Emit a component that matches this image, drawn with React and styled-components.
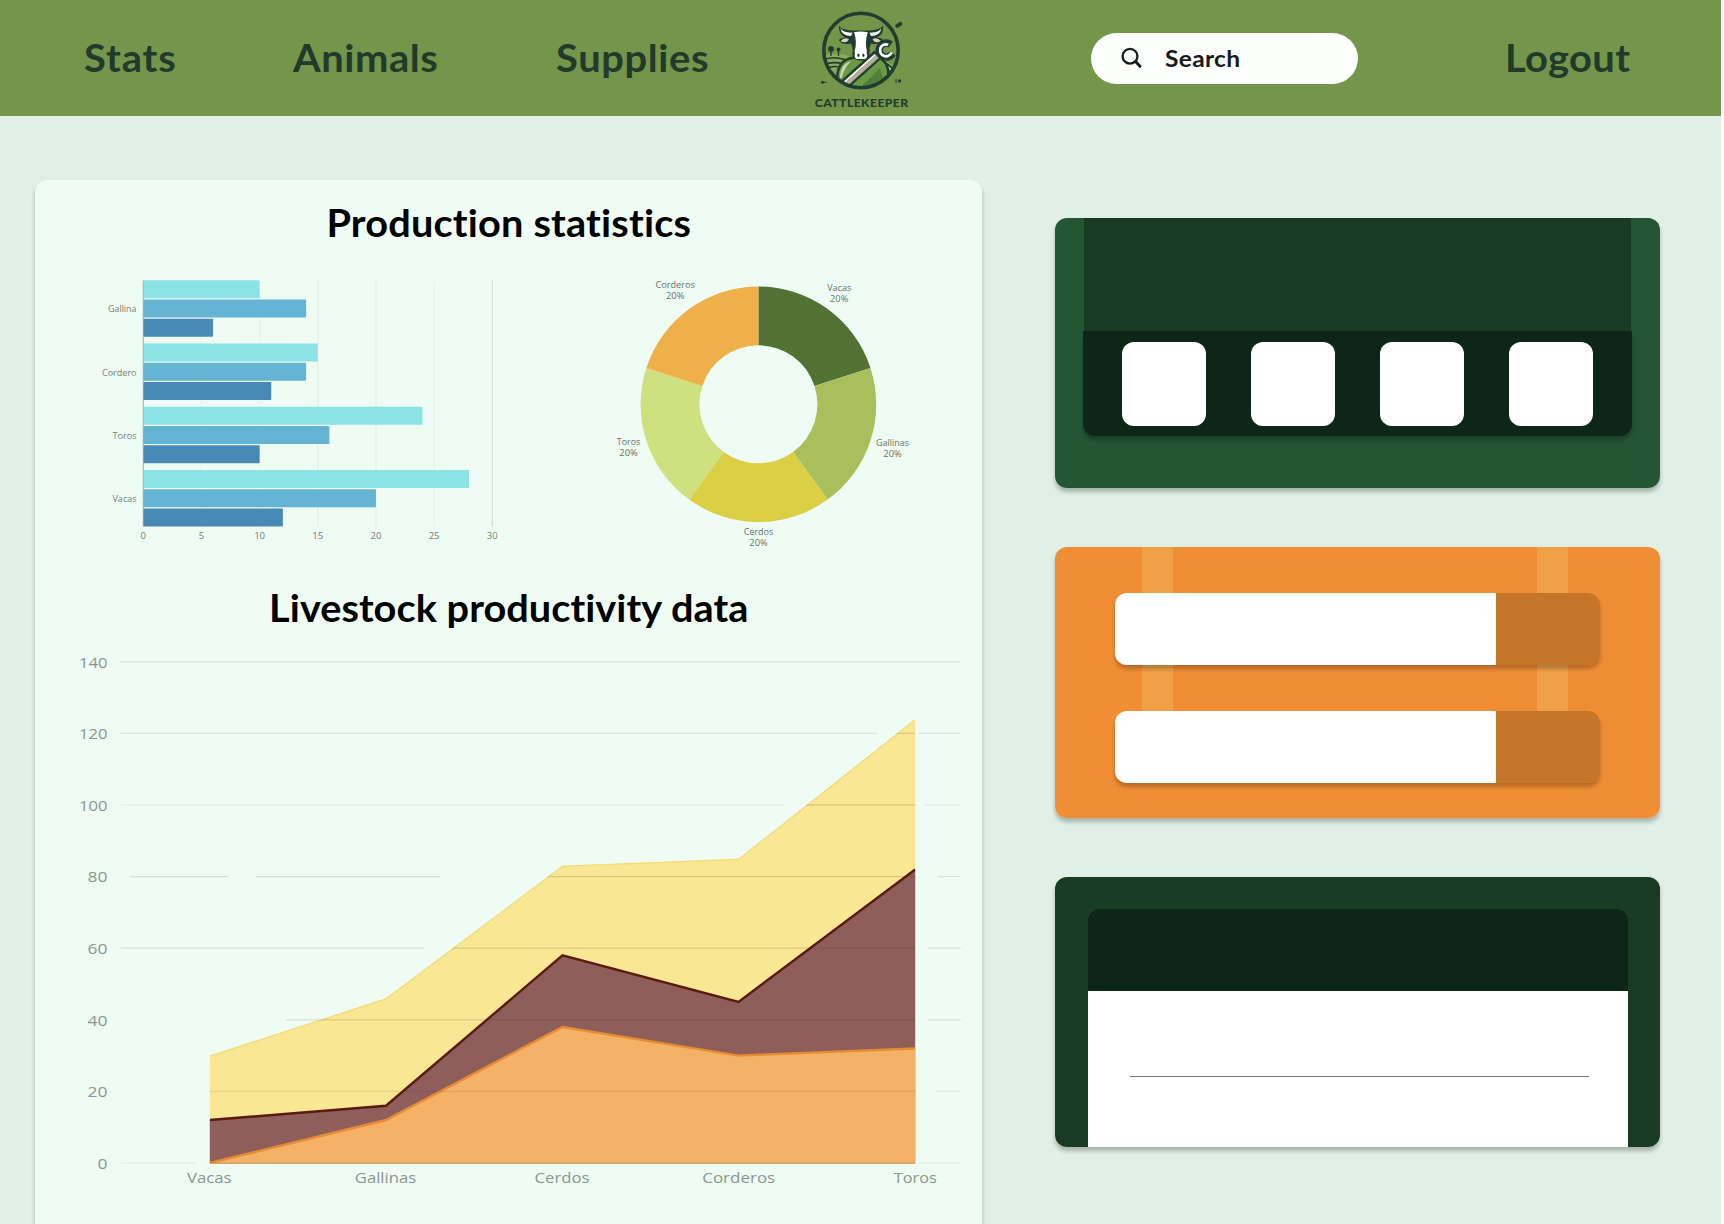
import React from 'react';
import styled, { createGlobalStyle } from 'styled-components';

const Global = createGlobalStyle`
  *, *::before, *::after { box-sizing: border-box; }
  html, body { margin: 0; padding: 0; background: #e0f0e6; overflow: hidden; }
  body { font-family: Lato, "Open Sans", sans-serif; font-variant-ligatures: none; }
`;

const Page = styled.div`
  display: flex;
  flex-direction: column;
  width: 1724px;
  height: 1224px;
  overflow: hidden;
  background: #e0f0e6;
  border-right: 3px solid #ffffff;
`;

const Header = styled.header`
  display: flex;
  align-items: flex-start;
  flex: none;
  height: 116px;
  padding-left: 83.5px;
  background: #73964b;
`;

const NavLink = styled.a`
  flex: none;
  width: ${(p) => p.$width}px;
  margin: 34px ${(p) => p.$after}px 0 0;
  color: #213a2b;
  font-size: 38px;
  font-weight: 700;
  line-height: 46px;
  letter-spacing: ${(p) => p.$spacing}px;
  white-space: nowrap;
  transform: scaleX(1.05);
  transform-origin: left center;
`;

const LogoSlot = styled.div`
  flex: none;
  width: 100px;
  height: 105px;
  margin: 5px 176px 0 0;
`;

const SearchBox = styled.div`
  display: flex;
  align-items: center;
  flex: none;
  width: 267px;
  height: 51px;
  margin: 32.5px 147px 0 0;
  padding-left: 30px;
  gap: 21.5px;
  border-radius: 26px;
  background: #fdfffd;
`;

const SearchLabel = styled.span`
  color: #181c1a;
  font-size: 23.5px;
  font-weight: 700;
  line-height: 30px;
  padding-bottom: 1px;
  letter-spacing: 0.3px;
  transform: scaleX(1.045);
  transform-origin: left center;
`;

const Main = styled.main`
  display: flex;
  align-items: flex-start;
  flex: 1;
  padding-left: 34.6px;
  gap: 73.2px;
`;

const Panel = styled.section`
  display: flex;
  flex-direction: column;
  flex: none;
  width: 947.5px;
  height: 1100px;
  margin-top: 63.8px;
  border-radius: 12px;
  background: #effcf4;
  box-shadow: 0 4px 4px rgba(0, 0, 0, 0.25);
`;

const Title = styled.h2`
  margin: ${(p) => p.$top}px 0 0;
  height: 46px;
  color: #000;
  font-size: 38px;
  font-weight: 700;
  line-height: 46px;
  letter-spacing: ${(p) => p.$spacing}px;
  text-align: center;
  white-space: nowrap;
  transform: scaleX(1.045);
`;

const ChartRow = styled.div`
  display: flex;
  height: 300px;
  margin-top: 12.2px;
  padding-left: 45.4px;
  gap: 80px;
`;

const Chart = styled.svg`
  display: block;
  flex: none;
  font-family: "Open Sans", "Noto Sans", sans-serif;
`;

const AreaSlot = styled.div`
  margin: 14px 0 0 0.4px;
`;

const Side = styled.aside`
  display: flex;
  flex-direction: column;
  flex: none;
  width: 605px;
  margin-top: 102px;
  gap: 59px;
`;

const Card = styled.article`
  position: relative;
  display: flex;
  flex-direction: column;
  height: 270.4px;
  overflow: hidden;
  border-radius: 12px;
  background: ${(p) => p.$color};
`;

const CardShadow = styled.div`
  border-radius: 12px;
  box-shadow: 0 4px 4px rgba(0, 0, 0, 0.25);
`;

const Screen = styled.div`
  height: 113.4px;
  margin: 0 29px;
  background: #193b24;
`;

const Tray = styled.div`
  display: flex;
  justify-content: space-between;
  height: 105px;
  margin: 0 28.7px 0 28px;
  padding: 11px 38.5px 0 39.2px;
  border-radius: 0 0 12px 12px;
  background: #0d2618;
  box-shadow: 0 4px 4px rgba(0, 0, 0, 0.25);
`;

const Tile = styled.div`
  width: 84px;
  height: 84px;
  border-radius: 12px;
  background: #fff;
`;

const Straps = styled.div`
  position: absolute;
  inset: 0 92px 60px 86.3px;
  display: flex;
  justify-content: space-between;
`;

const Strap = styled.div`
  width: 31.2px;
  background: #f0a148;
`;

const Fields = styled.div`
  position: relative;
  display: flex;
  flex-direction: column;
  gap: 46.3px;
  padding: 45.6px 60.7px 0 60px;
`;

const Field = styled.div`
  height: 72px;
  border-radius: 12px;
  background: linear-gradient(to right, #fff 381.5px, #c4762a 381.5px);
  box-shadow: 0 4px 4px rgba(0, 0, 0, 0.25);
`;

const Sheet = styled.div`
  display: flex;
  flex-direction: column;
  flex: 1;
  margin: 32.4px 32.5px 0 32.4px;
  border-radius: 12px 12px 0 0;
`;

const SheetHead = styled.div`
  flex: none;
  height: 82.3px;
  border-radius: 12px 12px 0 0;
  background: #0d2618;
`;

const SheetBody = styled.div`
  flex: 1;
  padding: 85px 38.5px 0 42px;
  background: #fff;
`;

const Rule = styled.div`
  height: 1px;
  background: #777;
`;

const INK = '#213d2f';

function Logo() {
  return (
    <svg width="100" height="105" viewBox="815 5 100 105">
      <defs>
        <clipPath id="badge"><circle cx="861" cy="50.5" r="37" /></clipPath>
      </defs>
      <g clipPath="url(#badge)">
        <path d="M822 56 Q840 50 856 60 L850 90 L822 80Z" fill="#87ad5c" />
        <path d="M822 60 Q838 54 854 64 M822 65 Q838 59 850 68 M822 71 Q832 64 842 68" stroke={INK} strokeWidth="1.6" fill="none" />
        <path d="M884 60 L902 72 L890 88 L880 78Z" fill="#a5c47d" />
        <path d="M884 62 Q893 67 899 76 M884 67 Q892 72 896 82" stroke={INK} strokeWidth="2" fill="none" />
        <path d="M852 58 Q838 60 837 78 L845 90 H880 L888 78 Q890 60 875 56Z" fill="#6b9a47" stroke={INK} strokeWidth="2.5" />
        <path d="M840 78 Q840 64 851 61 Q843 69 842 78Z" fill="#c7d8af" />
        <path d="M862 86 L880 68 L884 82 L872 88Z" fill="#4f7f3a" />
        <path d="M844 85 L878 54.5" stroke={INK} strokeWidth="10.5" />
        <path d="M845 84.5 L877 56" stroke="#b4b096" strokeWidth="5.4" />
        <path d="M844.5 81.8 L875 54.6" stroke="#fff" strokeWidth="1.5" />
      </g>
      <circle cx="861" cy="50.5" r="37.2" fill="none" stroke={INK} strokeWidth="3.6" />
      <circle cx="831" cy="49" r="3" fill={INK} />
      <circle cx="838.5" cy="49.5" r="2" fill={INK} />
      <path d="M831 49V56M838.5 49V56" stroke={INK} strokeWidth="1.4" />
      <path d="M839 25.5 Q841 30 853 30.5 H869 Q880 30 883 25.5 Q884.5 34 877 37.5 Q883 38 883 40.5 Q880 45.5 871 43.5 L869.5 48 V56 Q867 60.5 861 60.5 Q854.5 60.5 852.5 56 V48 L851 43.5 Q842 45.5 839 40.5 Q839 38 845 37.5 Q838 34 839 25.5Z" fill={INK} />
      <path d="M840.3 28 Q843 33 852.5 32.6 L851 36 Q842 36 840.3 28Z M881.5 28 Q879 33 869.5 32.6 L871 36 Q880 36 881.5 28Z" fill="#fff" />
      <path d="M840.5 41 Q845 36.5 849 39.5 Q846 44 840.5 41Z M881 41 Q876.5 36.5 872.5 39.5 Q875.5 44 881 41Z" fill="#d7d0ba" />
      <path d="M854 32.2 Q861 31 867.8 32.2 Q864.5 42 867 51.5 L864 58 H857.5 L854.5 51.5 Q857.5 42 854 32.2Z" fill="#fff" />
      <rect x="854.6" y="51.8" width="12.6" height="7.2" rx="3.6" fill="#fff" />
      <ellipse cx="858.4" cy="55.2" rx="1.1" ry="1.7" fill={INK} />
      <ellipse cx="863.4" cy="55.2" rx="1.1" ry="1.7" fill={INK} />
      <path d="M890.6 44.6 A7 7 0 1 0 892.4 53.4" stroke={INK} strokeWidth="7.4" fill="none" />
      <path d="M888.2 44.7 A6 6 0 1 0 891.6 52.6" stroke="#fff" strokeWidth="2.7" fill="none" />
      <path d="M897.3 25.8 L900.3 23.8" stroke={INK} strokeWidth="4" strokeLinecap="round" />
      <circle cx="822.5" cy="82.3" r="1.5" fill={INK} />
      <path d="M824 82.3H826.5M896 79V83" stroke={INK} strokeWidth="1" />
      <circle cx="899.5" cy="81" r="1.8" fill={INK} />
      <text x="814.8" y="106.6" textLength="93.8" lengthAdjust="spacingAndGlyphs" fontFamily="Lato, sans-serif" fontWeight="900" fontSize="12" letterSpacing="0.4" fill={INK}>CATTLEKEEPER</text>
    </svg>
  );
}

function SearchIcon() {
  return (
    <svg width="22" height="22" viewBox="0 0 22 22" fill="none" stroke="#181c1a" strokeLinecap="round">
      <circle cx="9" cy="9.2" r="7.4" strokeWidth="2.3" />
      <path d="M15 15 L19 19.3" strokeWidth="3" />
    </svg>
  );
}

const groups = [
  { name: 'Gallina', values: [10, 14, 6], width: 28.5 },
  { name: 'Cordero', values: [15, 14, 11], width: 34.5 },
  { name: 'Toros', values: [24, 16, 10], width: 24 },
  { name: 'Vacas', values: [28, 20, 12], width: 24 },
];
const barColors = ['#8ce3e6', '#65b4d3', '#4989b5'];

function BarChart() {
  const x = (v) => 143.3 + v * 11.633;
  return (
    <Chart width="440" height="300" viewBox="80 257 440 300" fontSize="9.6" fill="#74827a">
      {[0, 5, 10, 15, 20, 25, 30].map((v) => (
        <g key={v}>
          <line x1={x(v)} x2={x(v)} y1="280.5" y2="526.7" stroke={v === 5 || v === 10 || v === 25 ? '#e5f1e9' : v === 30 || v === 0 ? '#cbd9d0' : '#dfeae3'} />
          <text x={x(v)} y="539.2" textAnchor="middle">{v}</text>
        </g>
      ))}
      {groups.map((g, i) => (
        <g key={g.name}>
          {g.values.map((v, j) => (
            <rect key={j} x={x(0)} y={280.3 + i * 63.25 + j * 19.2} width={v * 11.633} height="18" rx="0.9" fill={barColors[j]} />
          ))}
          <text x={136.5 - g.width} y={312.4 + i * 63.25} textLength={g.width} lengthAdjust="spacingAndGlyphs">{g.name}</text>
        </g>
      ))}
      <line x1="143.3" x2="143.3" y1="280.5" y2="526.7" stroke="#8aa3a4" strokeOpacity="0.6" />
    </Chart>
  );
}

const slices = [
  { name: 'Vacas', color: '#517233', x: 839.2, y: 291.2, width: 24 },
  { name: 'Gallinas', color: '#a8bf5b', x: 892.5, y: 445.7, width: 33 },
  { name: 'Cerdos', color: '#dbcf46', x: 758.5, y: 534.8, width: 29.5 },
  { name: 'Toros', color: '#cee17e', x: 628.5, y: 444.5, width: 23.5 },
  { name: 'Corderos', color: '#efaf49', x: 675.2, y: 288, width: 39.5 },
];

function DonutChart() {
  const pt = (r, turn) => {
    const a = (turn - 0.25) * Math.PI * 2;
    return `${758.4 + r * Math.cos(a)} ${404.3 + r * Math.sin(a)}`;
  };
  return (
    <Chart width="340" height="300" viewBox="600 257 340 300" fontSize="9.6" fill="#66736c">
      {slices.map((s, i) => (
        <g key={s.name}>
          <path
            fill={s.color}
            d={`M${pt(117.8, i / 5)} A117.8 117.8 0 0 1 ${pt(117.8, (i + 1) / 5)} L${pt(59, (i + 1) / 5)} A59 59 0 0 0 ${pt(59, i / 5)}Z`}
          />
          <text x={s.x - s.width / 2} y={s.y} textLength={s.width} lengthAdjust="spacingAndGlyphs">{s.name}</text>
          <text x={s.x - 9.2} y={s.y + 11.2} textLength="18.4" lengthAdjust="spacingAndGlyphs">20%</text>
        </g>
      ))}
    </Chart>
  );
}

const columns = [209.8, 386, 562.5, 738.5, 915.2];
const layers = [
  { values: [30, 46, 83, 85, 124], fill: '#fae794', stroke: '#f2dc78' },
  { values: [12, 16, 58, 45, 82], fill: '#8e5e5b', stroke: '#5a1a10' },
  { values: [0, 12, 38, 30, 32], fill: '#f3b267', stroke: '#e88c34' },
];
const gridRuns = {
  140: [[120.7, 960.7]],
  120: [[120.7, 877], [919, 960.7]],
  100: [[120.7, 785], [925, 960.7]],
  80: [[130, 228], [256, 440], [938, 960.7]],
  60: [[120.7, 424], [928, 960.7]],
  40: [[286, 322], [928, 960.7]],
  20: [[936, 960.7]],
  0: [[120.7, 195], [918, 960.7]],
};
const areaLabels = [['Vacas', 209.3, 44.5], ['Gallinas', 385.5, 61.5], ['Cerdos', 562, 55], ['Corderos', 738.7, 73], ['Toros', 915.3, 43]];

function AreaChart() {
  const y = (v) => 1163 - v * 3.58;
  const line = (vals) => vals.map((v, i) => `${columns[i]},${y(v)}`).join(' ');
  return (
    <Chart width="947" height="580" viewBox="35 644 947 580" fontSize="14.2" fill="#8b968f">
      <defs>
        <clipPath id="area">
          <polygon points={`209.8,1163.5 ${line(layers[0].values)} 915.2,1163.5`} />
        </clipPath>
      </defs>
      {Object.entries(gridRuns).map(([v, runs]) => (
        <g key={v}>
          {runs.map(([a, b]) => (
            <line key={a} x1={a} x2={b} y1={y(v)} y2={y(v)} stroke={v === '100' || v === '0' || v === '20' ? '#dfebe3' : '#dadfd9'} strokeWidth="1.2" />
          ))}
          <text x="107.5" y={y(v) + 5.8} textAnchor="end" textLength={v.length === 3 ? 28.5 : v.length === 2 ? 20 : 10} lengthAdjust="spacingAndGlyphs">{v}</text>
        </g>
      ))}
      {layers.map((l) => (
        <g key={l.fill}>
          <polygon points={`209.8,1163.5 ${line(l.values)} 915.2,1163.5`} fill={l.fill} />
          <polyline points={line(l.values)} fill="none" stroke={l.stroke} strokeWidth="2.4" clipPath="url(#area)" />
        </g>
      ))}
      <g clipPath="url(#area)" stroke="#50300c" strokeWidth="1.3">
        {[0, 20, 40, 60, 80, 100, 120].map((v) => <line key={v} x1="209" x2="916" y1={y(v)} y2={y(v)} strokeOpacity={v <= 20 ? 0.1 : 0.17} />)}
      </g>
      {areaLabels.map(([name, cx, w]) => (
        <text key={name} x={cx - w / 2} y="1182.8" textLength={w} lengthAdjust="spacingAndGlyphs">{name}</text>
      ))}
    </Chart>
  );
}

export default function App() {
  return (
    <Page>
      <Global />
      <Header>
        <NavLink $width={92.5} $after={117} $spacing={0.85}>Stats</NavLink>
        <NavLink $width={146} $after={117} $spacing={0.52}>Animals</NavLink>
        <NavLink $width={154} $after={105} $spacing={0.58}>Supplies</NavLink>
        <LogoSlot><Logo /></LogoSlot>
        <SearchBox>
          <SearchIcon />
          <SearchLabel>Search</SearchLabel>
        </SearchBox>
        <NavLink $width={130} $after={0} $spacing={0.3}>Logout</NavLink>
      </Header>
      <Main>
        <Panel>
          <Title $top={19} $spacing={0.17}>Production statistics</Title>
          <ChartRow>
            <BarChart />
            <DonutChart />
          </ChartRow>
          <Title $top={27} $spacing={0.03}>Livestock productivity data</Title>
          <AreaSlot><AreaChart /></AreaSlot>
        </Panel>
        <Side>
          <CardShadow>
            <Card $color="#245634">
              <Screen />
              <Tray><Tile /><Tile /><Tile /><Tile /></Tray>
            </Card>
          </CardShadow>
          <CardShadow>
            <Card $color="#f08e35">
              <Straps><Strap /><Strap /></Straps>
              <Fields><Field /><Field /></Fields>
            </Card>
          </CardShadow>
          <CardShadow>
            <Card $color="#193b24">
              <Sheet>
                <SheetHead />
                <SheetBody><Rule /></SheetBody>
              </Sheet>
            </Card>
          </CardShadow>
        </Side>
      </Main>
    </Page>
  );
}
